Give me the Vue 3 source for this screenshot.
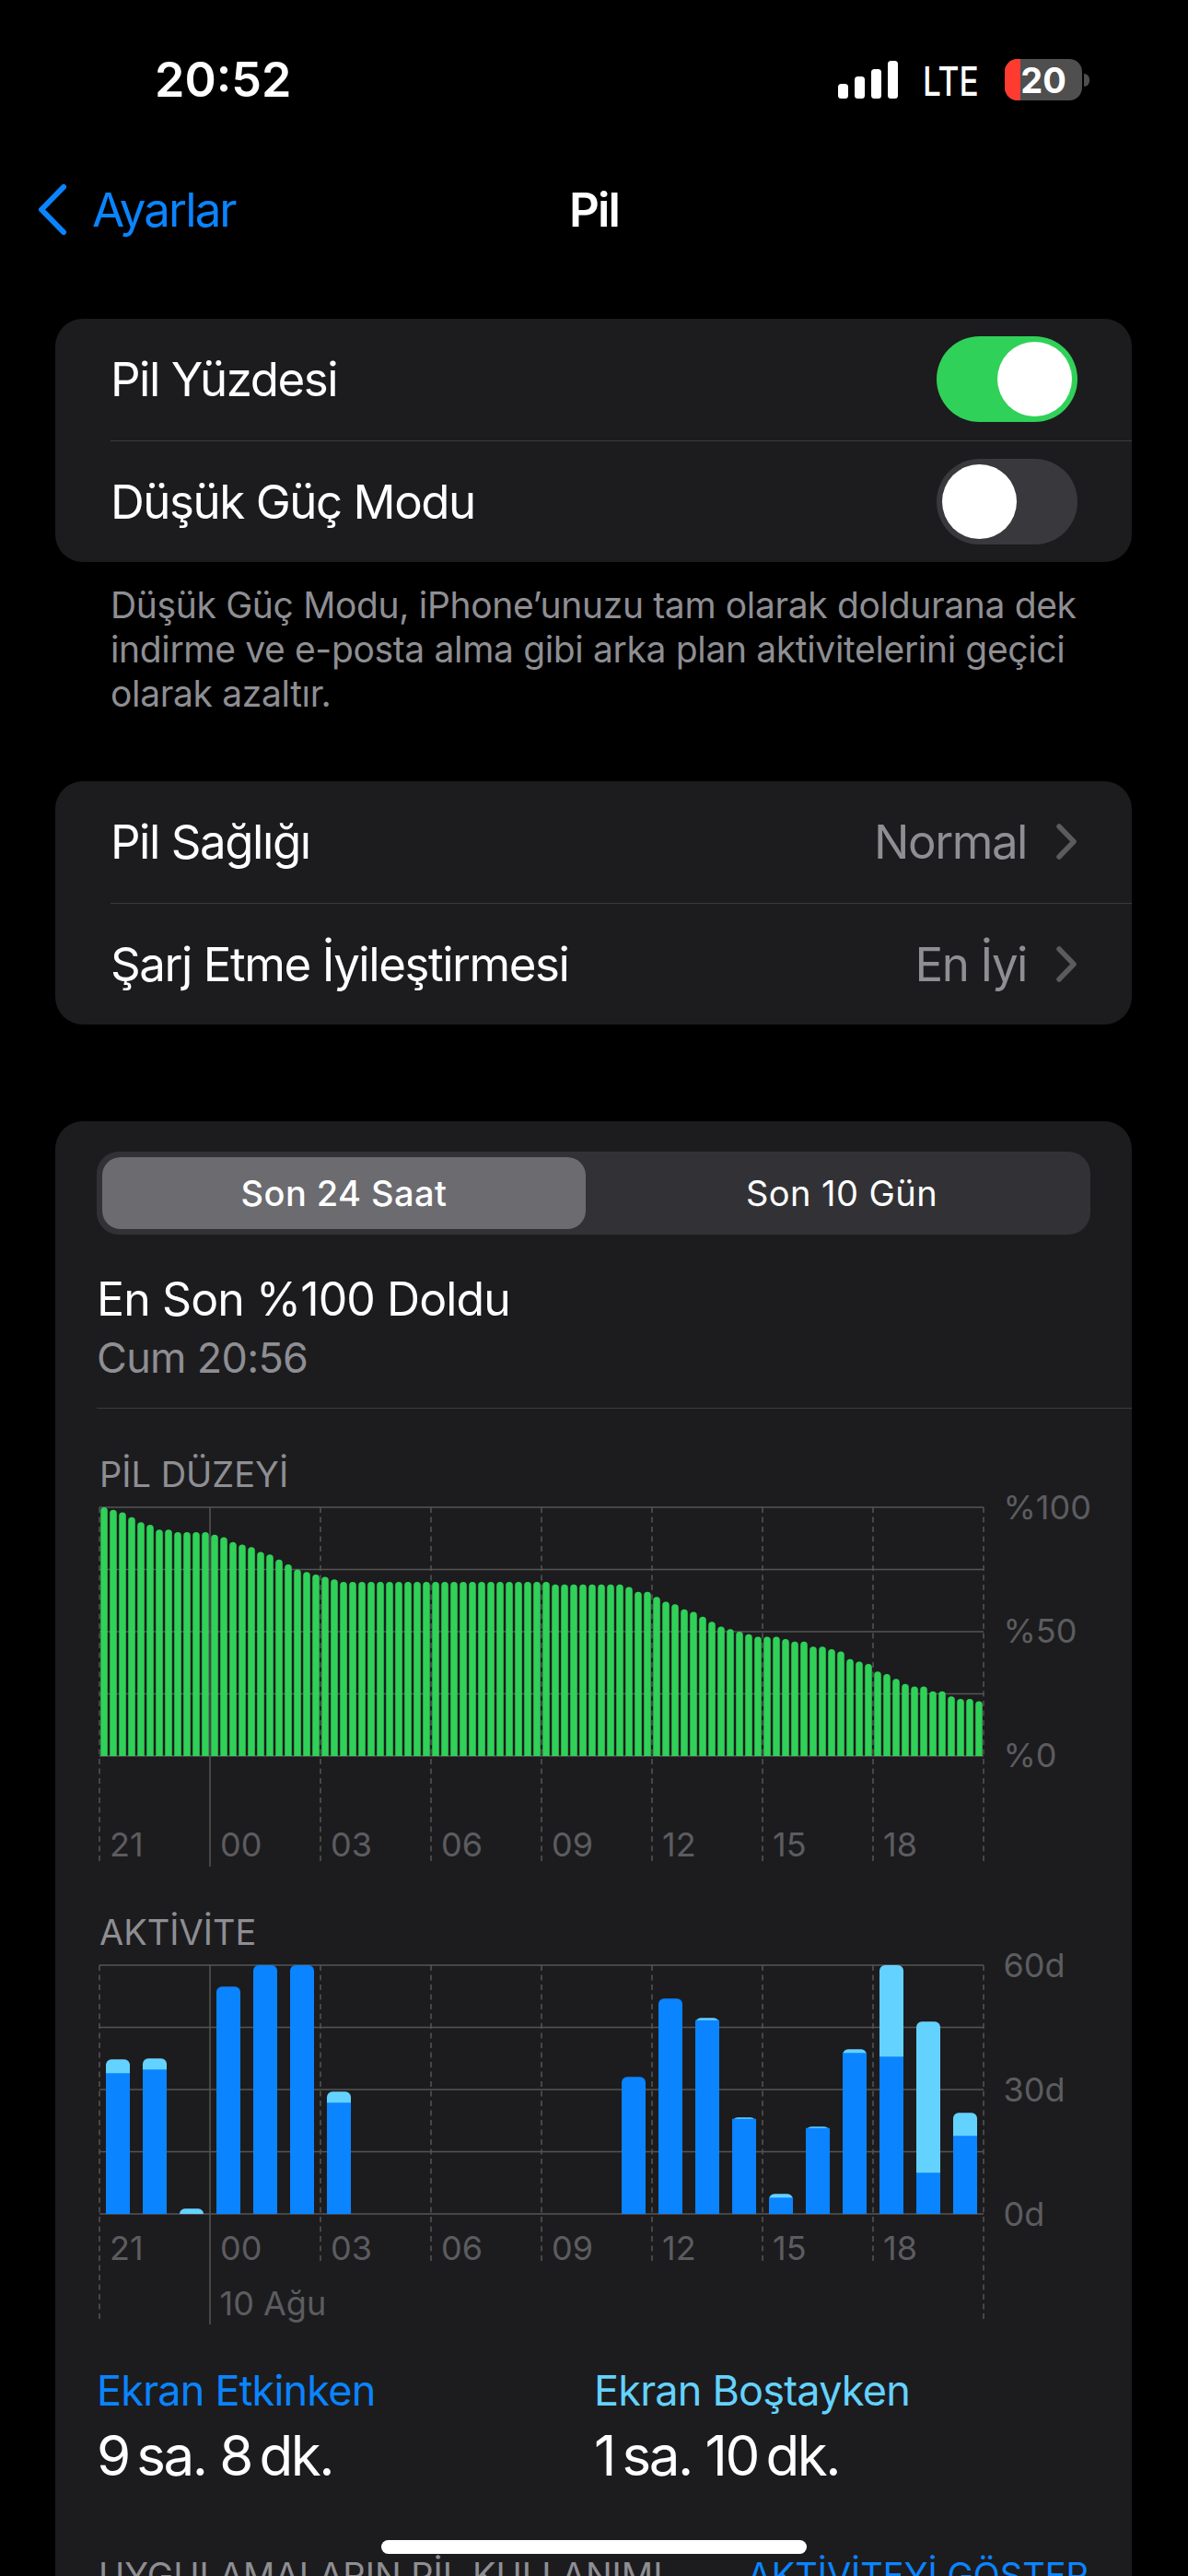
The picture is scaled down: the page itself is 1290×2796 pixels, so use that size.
<template>
  <div class="screen">
    <div class="status-bar">
      <span class="time">20:52</span>
      <div class="status-right">
        <svg class="signal" width="65" height="41" viewBox="0 0 65 41" aria-hidden="true">
          <rect x="0" y="25" width="11" height="16" rx="3.5" />
          <rect x="18" y="17" width="11" height="24" rx="3.5" />
          <rect x="36" y="9" width="11" height="32" rx="3.5" />
          <rect x="54" y="0" width="11" height="41" rx="3.5" />
        </svg>
        <span class="lte">LTE</span>
        <div class="battery">
          <div class="battery-body">
            <span class="battery-fill"></span>
            <span class="battery-text">20</span>
          </div>
          <span class="battery-tip"></span>
        </div>
      </div>
    </div>

    <div class="nav">
      <div class="nav-back">
        <svg width="33" height="57" viewBox="0 0 33 57" aria-hidden="true">
          <path d="M29 4 L5 28.5 L29 53" fill="none" stroke="#0a84ff" stroke-width="6" stroke-linecap="round" stroke-linejoin="round" />
        </svg>
        <span>Ayarlar</span>
      </div>
      <span class="nav-title">Pil</span>
    </div>

    <section class="card card-first">
      <div class="row">
        <span>Pil Yüzdesi</span>
        <span class="toggle toggle-on"><span class="knob"></span></span>
      </div>
      <div class="row">
        <span>Düşük Güç Modu</span>
        <span class="toggle"><span class="knob"></span></span>
      </div>
    </section>
    <p class="footnote">Düşük Güç Modu, iPhone’unuzu tam olarak doldurana dek indirme ve e-posta alma gibi arka plan aktivitelerini geçici olarak azaltır.</p>

    <section class="card card-second">
      <div class="row">
        <span>Pil Sağlığı</span>
        <span class="row-value">Normal
          <svg width="23" height="39" viewBox="0 0 23 39" aria-hidden="true"><path d="M3 3 L19 19.5 L3 36" /></svg>
        </span>
      </div>
      <div class="row">
        <span>Şarj Etme İyileştirmesi</span>
        <span class="row-value">En İyi
          <svg width="23" height="39" viewBox="0 0 23 39" aria-hidden="true"><path d="M3 3 L19 19.5 L3 36" /></svg>
        </span>
      </div>
    </section>

    <section class="card card-usage">
      <div class="segmented">
        <span class="segment segment-active">Son 24 Saat</span>
        <span class="segment">Son 10 Gün</span>
      </div>

      <div class="last-charge">
        <div class="last-title">En Son %100 Doldu</div>
        <div class="last-date">Cum 20:56</div>
      </div>

      <div class="chart-block chart-level">
        <div class="chart-title">PİL DÜZEYİ</div>
        <svg class="chart" width="1125" height="396" viewBox="0 0 1125 396">
          <line v-for="y in [0, 67.5, 135, 202.5, 270]" :key="y" class="grid" x1="3" x2="963" :y1="y + 5" :y2="y + 5" />
          <line v-for="x in levelDashes" :key="x" class="grid dash" :x1="x" :x2="x" y1="5" y2="389" />
          <line class="grid" x1="123" x2="123" y1="5" y2="395" />
          <path v-for="(level, i) in levels" :key="i" class="level-bar" :d="levelPath(level, i)" />
          <text v-for="t in hourLabels" :key="t.label" class="tick" :x="t.x" y="384">{{ t.label }}</text>
          <text class="tick" x="984.5" y="18">%100</text>
          <text class="tick" x="984.5" y="152">%50</text>
          <text class="tick" x="984.5" y="287">%0</text>
        </svg>
      </div>

      <div class="chart-block chart-activity">
        <div class="chart-title">AKTİVİTE</div>
        <svg class="chart" width="1125" height="396" viewBox="0 0 1125 396">
          <line v-for="y in [0, 67.5, 135, 202.5, 270]" :key="y" class="grid" x1="3" x2="963" :y1="y + 5" :y2="y + 5" />
          <line v-for="x in activityShortDashes" :key="x" class="grid dash" :x1="x" :x2="x" y1="5" y2="329" />
          <line v-for="x in [3, 963]" :key="x" class="grid dash" :x1="x" :x2="x" y1="5" y2="389" />
          <line class="grid" x1="123" x2="123" y1="5" y2="395" />
          <template v-for="(bar, i) in activity" :key="i">
            <path v-if="bar[1] > bar[0]" class="bar-idle" :d="activityPath(bar[1], i)" />
            <path v-if="bar[0] > 0" class="bar-active" :d="activityPath(bar[0], i, bar[1] > bar[0])" />
          </template>
          <text v-for="t in hourLabels" :key="t.label" class="tick" :x="t.x" y="325">{{ t.label }}</text>
          <text class="tick" x="133.5" y="385">10 Ağu</text>
          <text class="tick" x="984.5" y="18">60d</text>
          <text class="tick" x="984.5" y="153">30d</text>
          <text class="tick" x="984.5" y="288">0d</text>
        </svg>
      </div>

      <div class="totals">
        <div class="total">
          <div class="total-label label-active">Ekran Etkinken</div>
          <div class="total-value">9&#8201;sa. 8&#8201;dk.</div>
        </div>
        <div class="total">
          <div class="total-label label-idle">Ekran Boştayken</div>
          <div class="total-value">1&#8201;sa. 10&#8201;dk.</div>
        </div>
      </div>

      <div class="usage-head">
        <span>UYGULAMALARIN PİL KULLANIMI</span>
        <span class="usage-link">AKTİVİTEYİ GÖSTER</span>
      </div>
    </section>

    <div class="home-indicator"></div>
  </div>
</template>

<script setup>
const levels = [
  100, 99, 98, 96, 94, 93, 91, 91, 90, 90, 90, 90, 89, 88, 86, 85, 84, 82, 81, 79, 77, 75, 74, 73, 72, 71,
  ...Array(23).fill(70),
  ...Array(8).fill(69),
  68, 66, 66, 64, 62, 61, 59, 58, 56, 54, 52, 51, 50, 49, 48, 48, 48, 47, 46, 46,
  44, 44, 43, 42, 39, 38, 37, 34, 33, 31, 29, 28, 28, 26, 26, 24, 23, 23, 22
]

// [active px, total px] for each hour
const activity = [
  [152.7, 167.7], [156.7, 168.7], [0, 5.7], [246.7, 246.7], [270, 270], [270, 270], [120.7, 132.7],
  [0, 0], [0, 0], [0, 0], [0, 0], [0, 0], [0, 0], [0, 0],
  [148.7, 148.7], [233.7, 233.7], [210.3, 212.7], [103.3, 104.7], [17.7, 21.7], [93.3, 94.7],
  [174.7, 178.7], [170.7, 270], [44.7, 208.7], [84.7, 109.7]
]

const levelDashes = [3, 243, 363, 483, 603, 723, 843, 963]
const activityShortDashes = [243, 363, 483, 603, 723, 843]

const hourLabels = ['21', '00', '03', '06', '09', '12', '15', '18'].map((label, i) => ({
  label,
  x: 14 + i * 120
}))

const levelPath = (level, i) => {
  const x = 4.25 + i * 10
  const top = 275 - level * 2.7
  return `M${x} 275V${top + 3.75}a3.75 3.75 0 0 1 7.5 0V275z`
}

const activityPath = (height, i, flat = false) => {
  const x = 10 + i * 40
  const top = 275 - height
  if (flat) return `M${x} 275V${top}h26V275z`
  const r = Math.min(6, height)
  return `M${x} 275V${top + r}a${r} ${r} 0 0 1 ${r} -${r}h${26 - 2 * r}a${r} ${r} 0 0 1 ${r} ${r}V275z`
}
</script>

<style>
html,
body {
  margin: 0;
  background: #000;
}
</style>

<style scoped>
.screen {
  position: relative;
  width: 1290px;
  height: 2796px;
  overflow: hidden;
  background: #000;
  color: #fff;
  font-family: Inter, "Noto Sans", sans-serif;
  font-size: 51px;
}

.status-bar {
  display: flex;
  justify-content: space-between;
  height: 178px;
  padding: 64px 107px 0 168px;
  box-sizing: border-box;
}

.time {
  font-size: 52px;
  font-weight: 600;
  line-height: 46px;
}

.status-right {
  display: flex;
  align-items: flex-start;
}

.signal {
  margin: 2px 0 0 0;
  fill: #fff;
}

.lte {
  display: inline-block;
  width: 61px;
  margin: 4px 28px 0 27px;
  font-size: 44px;
  font-weight: 500;
  line-height: 40px;
  transform: scaleX(0.8);
  transform-origin: left center;
}

.battery {
  display: flex;
  align-items: center;
  gap: 2px;
}

.battery-body {
  position: relative;
  display: flex;
  align-items: center;
  justify-content: center;
  width: 84px;
  height: 45px;
  overflow: hidden;
  border-radius: 14px;
  background: #4f4f4f;
}

.battery-fill {
  position: absolute;
  top: 0;
  bottom: 0;
  left: 0;
  width: 17px;
  background: #ff3b30;
}

.battery-text {
  position: relative;
  font-size: 38px;
  font-weight: 700;
}

.battery-tip {
  width: 6px;
  height: 14px;
  border-radius: 0 7px 7px 0;
  background: #4f4f4f;
}

.nav {
  position: relative;
  display: flex;
  align-items: center;
  justify-content: center;
  height: 98px;
  letter-spacing: -1.9px;
}

.nav-back {
  position: absolute;
  left: 40px;
  display: flex;
  align-items: center;
  gap: 27px;
  color: #0a84ff;
}

.nav-title {
  font-weight: 600;
}

.card {
  margin: 0 61px 0 60px;
  border-radius: 30px;
  background: #1c1c1e;
}

.card-first {
  margin-top: 70px;
}

.row {
  display: flex;
  align-items: center;
  justify-content: space-between;
  height: 131.5px;
  margin-left: 60px;
  padding-right: 59px;
  letter-spacing: -1.45px;
}

.row + .row {
  border-top: 1px solid #3a3a3c;
}

.toggle {
  display: flex;
  align-items: center;
  width: 153px;
  height: 93px;
  padding: 0 6px;
  box-sizing: border-box;
  border-radius: 47px;
  background: #39393d;
}

.toggle-on {
  justify-content: flex-end;
  background: #30d158;
}

.knob {
  width: 81px;
  height: 81px;
  border-radius: 50%;
  background: #fff;
}

.footnote {
  width: 1060px;
  margin: 23px 0 0 120px;
  color: #8e8e93;
  font-size: 39px;
  line-height: 48px;
  letter-spacing: -0.35px;
}

.card-second {
  margin-top: 71px;
}

.row-value {
  display: flex;
  align-items: center;
  gap: 32px;
  color: #8e8e93;
}

.row-value svg {
  fill: none;
  stroke: #5b5b5e;
  stroke-width: 5.5;
  stroke-linecap: round;
  stroke-linejoin: round;
}

.card-usage {
  height: 1700px;
  margin-top: 105px;
  padding: 33px 45px 0 45px;
  overflow: hidden;
  box-sizing: border-box;
}

.segmented {
  display: grid;
  grid-template-columns: 525px 1fr;
  width: 1079px;
  height: 90px;
  padding: 6px;
  box-sizing: border-box;
  border-radius: 24px;
  background: #323236;
  font-size: 38px;
  letter-spacing: 0.45px;
}

.segment {
  display: flex;
  align-items: center;
  justify-content: center;
  padding-left: 14px;
}

.segment-active {
  padding-left: 0;
  border-radius: 20px;
  background: #6b6b70;
  font-weight: 500;
}

.last-charge {
  padding: 39px 0 27px 2px;
  margin-right: -45px;
  border-bottom: 1px solid #3a3a3c;
}

.last-title {
  margin-left: -2px;
  line-height: 62px;
  font-size: 50px;
  letter-spacing: -0.9px;
}

.last-date {
  margin-top: 6px;
  margin-left: -2px;
  color: #8e8e93;
  font-size: 45px;
  line-height: 54px;
  letter-spacing: -0.7px;
}

.chart-block {
  display: flex;
  flex-direction: column;
}

.chart-level {
  margin-top: 48px;
}

.chart-activity {
  margin-top: 47px;
}

.chart-title {
  margin-left: 3px;
  color: #8e8e93;
  font-size: 38px;
  line-height: 46px;
}

.chart {
  display: block;
  margin-top: 8px;
  overflow: visible;
}

.grid {
  stroke: #545456;
  stroke-width: 1.5;
}

.dash {
  stroke-dasharray: 6 4.5;
}

.level-bar {
  fill: #30d158;
}

.bar-active {
  fill: #0a84ff;
}

.bar-idle {
  fill: #64d2ff;
}

.tick {
  fill: #5c5c60;
  font-size: 36px;
}

.totals {
  display: grid;
  grid-template-columns: 540px 1fr;
  margin-top: 44px;
}

.total-label {
  font-size: 45px;
  line-height: 54px;
  letter-spacing: -0.8px;
}

.label-active {
  color: #0a84ff;
}

.label-idle {
  color: #64d2ff;
}

.total-value {
  margin-top: 7px;
  font-size: 60px;
  line-height: 72px;
  letter-spacing: -2.4px;
}

.usage-head {
  display: flex;
  justify-content: space-between;
  width: 1075px;
  margin-top: 71px;
  padding-left: 2px;
  color: #8e8e93;
  font-size: 38px;
}

.usage-link {
  color: #0a84ff;
}

.home-indicator {
  position: absolute;
  left: 414px;
  top: 2757px;
  width: 462px;
  height: 15px;
  border-radius: 8px;
  background: #fff;
}
</style>
